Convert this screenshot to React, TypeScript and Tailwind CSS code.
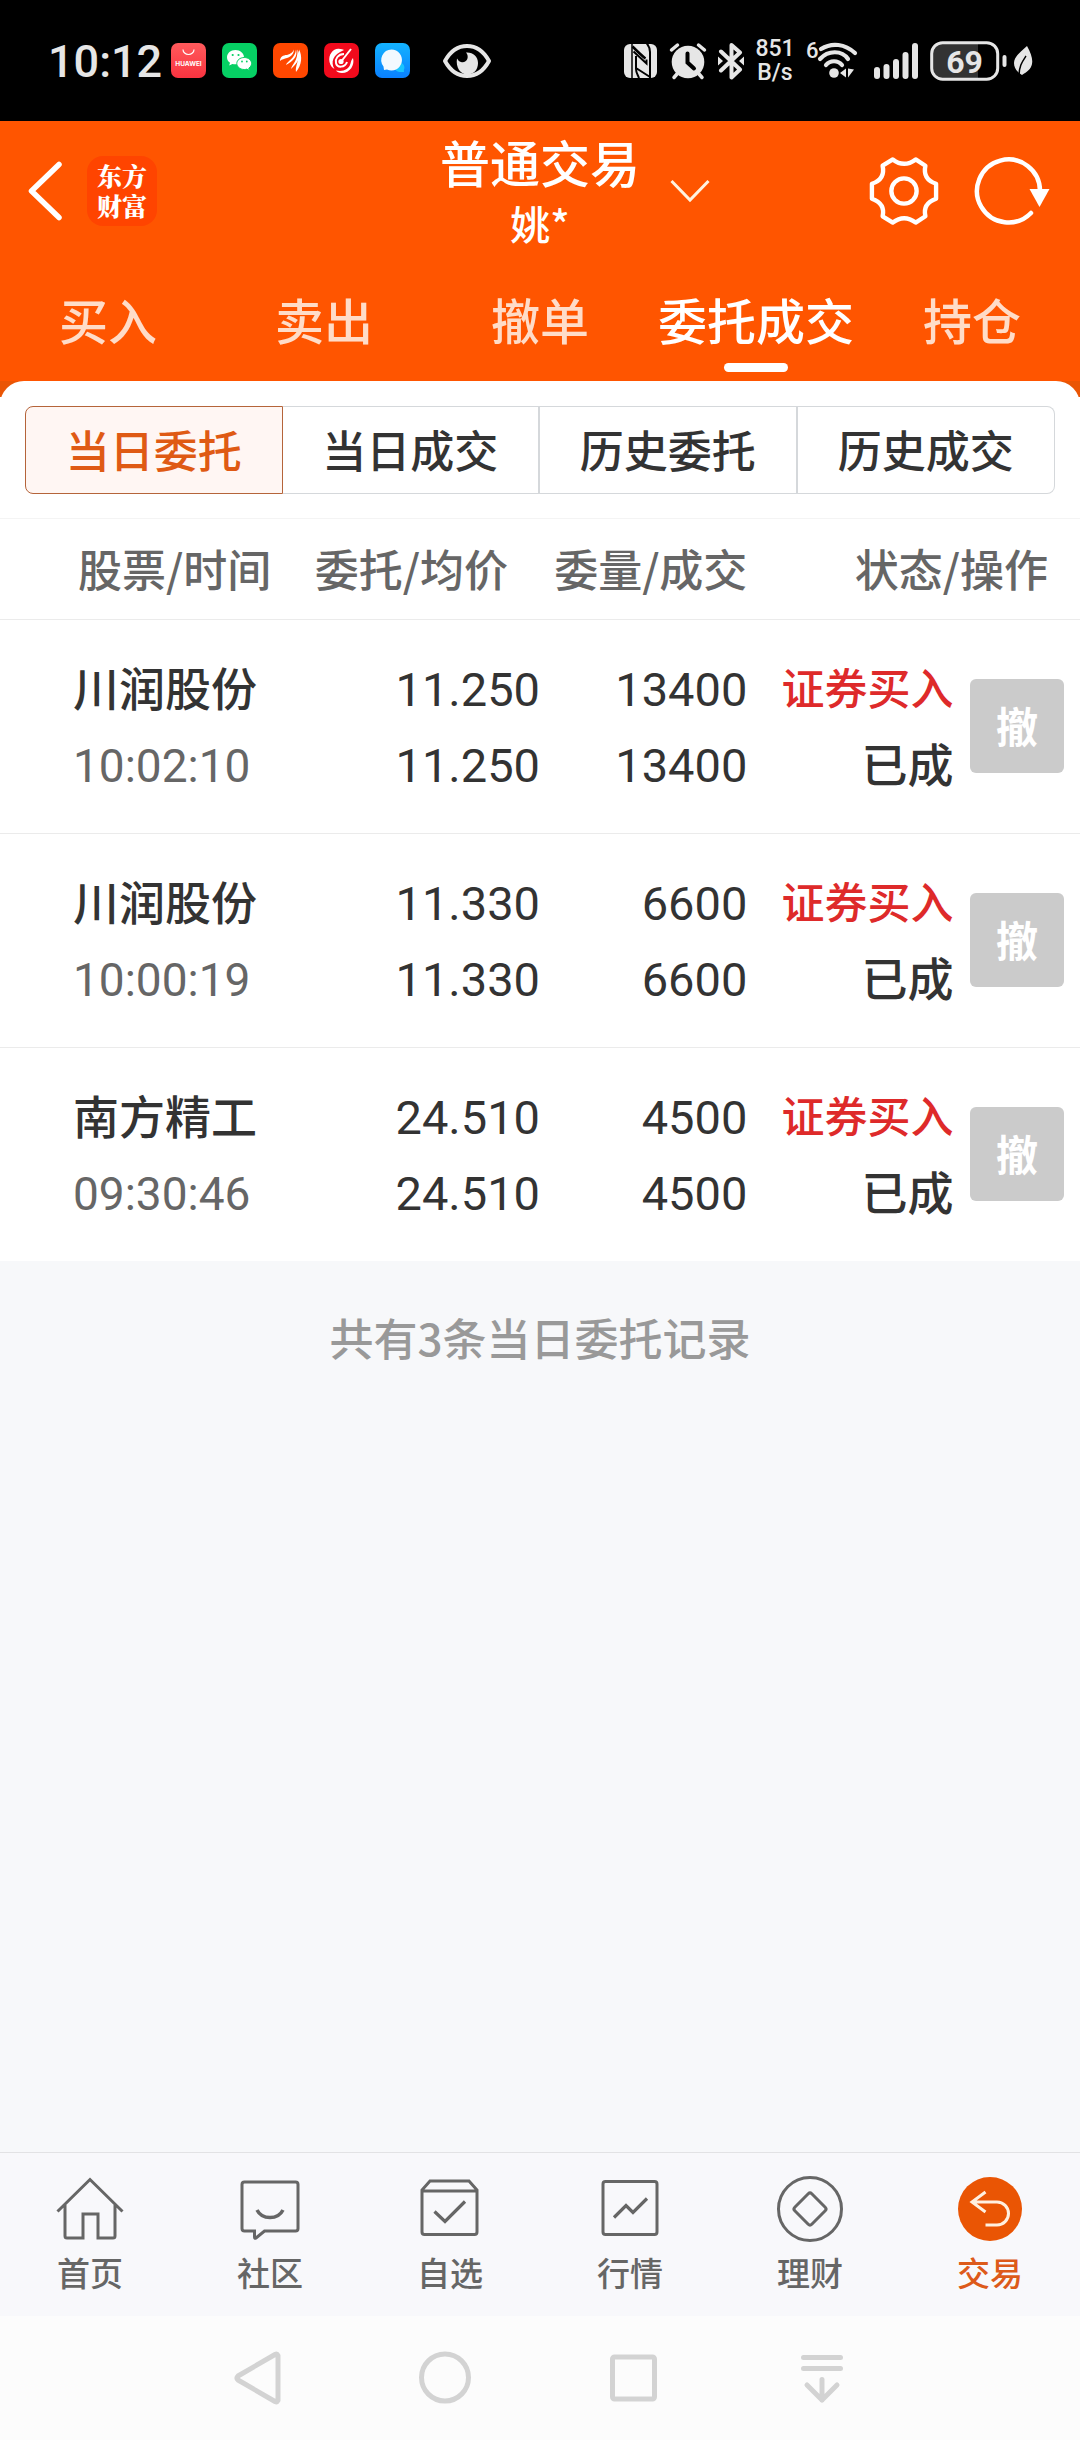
import React, { useState } from 'react';

interface Order {
  id: number;
  name: string;
  time: string;
  price: string;
  avgPrice: string;
  volume: number;
  filled: number;
  side: string;
  status: string;
}

const orders: Order[] = [
  { id: 1, name: '川润股份', time: '10:02:10', price: '11.250', avgPrice: '11.250', volume: 13400, filled: 13400, side: '证券买入', status: '已成' },
  { id: 2, name: '川润股份', time: '10:00:19', price: '11.330', avgPrice: '11.330', volume: 6600, filled: 6600, side: '证券买入', status: '已成' },
  { id: 3, name: '南方精工', time: '09:30:46', price: '24.510', avgPrice: '24.510', volume: 4500, filled: 4500, side: '证券买入', status: '已成' },
];

const mainTabs = ['买入', '卖出', '撤单', '委托成交', '持仓'];
const subTabs = ['当日委托', '当日成交', '历史委托', '历史成交'];

const numberFont = "font-['Roboto','Noto_Sans_CJK_SC',sans-serif]";

const AppBadges: React.FC = () => (
  <div className="flex items-center gap-4">
    <svg viewBox="0 0 35 35" className="size-[35px]">
      <defs>
        <linearGradient id="huawei" x1="0" y1="0" x2="0" y2="1">
          <stop offset="0" stopColor="#ff5a5c" />
          <stop offset="1" stopColor="#f93340" />
        </linearGradient>
      </defs>
      <rect width="35" height="35" rx="7" fill="url(#huawei)" />
      <path d="M12 6.5a5.5 5 0 0 0 11 0" fill="none" stroke="#fff" strokeWidth="1.2" />
      <text x="17.5" y="22.5" fontSize="6.5" fontWeight="700" fontFamily="Inter, sans-serif" textAnchor="middle" fill="#fff">HUAWEI</text>
    </svg>
    <svg viewBox="0 0 35 35" className="size-[35px]">
      <rect width="35" height="35" rx="7" fill="#06d064" />
      <path d="M13.5 7C8.600 7 5 10.200 5 14.200c0 2.300 1.200 4.200 3 5.500l-.8 2.800 3.200-1.600c1 .3 2 .4 3.100.4 4.700 0 8.500-3.200 8.500-7.100S18.200 7 13.500 7Z" fill="#fff" />
      <path d="M22.300 14.500c-4.200 0-7.500 2.700-7.500 6s3.300 6 7.500 6c.9 0 1.700-.1 2.500-.4l2.700 1.400-.7-2.400c1.700-1.100 2.800-2.700 2.800-4.600 0-3.300-3.200-6-7.300-6Z" fill="#fff" stroke="#06d064" />
      <circle cx="10.700" cy="12" r="1.100" fill="#06d064" />
      <circle cx="16.500" cy="12" r="1.100" fill="#06d064" />
      <circle cx="20" cy="18.500" r=".9" fill="#06d064" />
      <circle cx="24.800" cy="18.500" r=".9" fill="#06d064" />
    </svg>
    <svg viewBox="0 0 35 35" className="size-[35px]">
      <rect width="35" height="35" rx="7" fill="#ff4700" />
      <path d="M7 18c0-4 3-6 7-6 4-1 6-3 7-5.500-.3 5-3 7-7 8.500-2.500 1-5 1-7 3Z" fill="#fff" />
      <path d="M13 22c1-4 9-6 10-15.500C25 14 20 18 13 22Z" fill="#fff" />
      <path d="M18 26c1-5 7-8 6.500-19.500C28.500 14 26 18 18 26Z" fill="#fff" />
      <path d="M23 29c-1-6 3-10 3-22.500C29.500 13 29 22 23 29Z" fill="#fff" />
    </svg>
    <svg viewBox="0 0 35 35" className="size-[35px]">
      <rect width="35" height="35" rx="7" fill="#f20a1c" />
      <path d="M16 6C10 4.500 4 11 5.500 19c1 4 3 6 5 7-4-7-2-14 9.500-19-1.300-.7-3-1-4-1Z" fill="#fff" />
      <path d="M29 15c2 7-3 15-11 15-3 0-5-1-6-2.500 7 1.500 13-1 14.500-7 .5-2 1-4 2.500-5.500Z" fill="#fff" />
      <path d="M20 11c-6 0-9 5-8 9 1 5 9 5 11-1" fill="none" stroke="#fff" strokeWidth="2" />
      <path d="M27 6 16 20" stroke="#fff" strokeWidth="2" />
      <circle cx="17" cy="18.500" r="2.600" fill="#fff" />
    </svg>
    <svg viewBox="0 0 35 35" className="size-[35px]">
      <defs>
        <linearGradient id="message" x1="0" y1="0" x2="0" y2="1">
          <stop offset="0" stopColor="#13b3ff" />
          <stop offset="1" stopColor="#0a80ff" />
        </linearGradient>
      </defs>
      <rect width="35" height="35" rx="7" fill="url(#message)" />
      <path d="M24.500 19.500a5 5 0 0 1 4.300 7.400l.2 2.100h-4.500a4.750 4.750 0 0 1 0-9.500Z" fill="#19c5ff" />
      <path d="M16.500 6.500a10.500 10.500 0 1 1-4.500 20L9 27l-.5-3.500A10.500 10.500 0 0 1 16.500 6.500Z" fill="#f2f9ff" />
    </svg>
  </div>
);

const StatusBar: React.FC = () => (
  <div className={`flex h-[121px] items-center justify-between bg-black pr-[47px] pl-12 text-[#e6e6e6] ${numberFont}`}>
    <div className="flex items-center">
      <span className="w-[123px] pt-[2px] text-[45px] font-medium">10:12</span>
      <AppBadges />
      <svg viewBox="0 0 50 36" className="ml-8 h-9 w-[50px]" fill="none" stroke="currentColor" strokeWidth="4">
        <path d="M3 18C9 7 17 3 25 3s16 4 22 15c-6 11-14 15-22 15S9 29 3 18Z" strokeLinejoin="round" />
        <path d="M24 9.500c4 4.500.5 11-5 9.500-2-.5-3-2-4-3.500-1.500 9 3.500 16 10.500 16 6.500 0 10.500-5 10.500-11.500S31 9 24 9.500Z" fill="currentColor" stroke="none" />
      </svg>
    </div>

    <div className="flex items-center">
      <svg viewBox="0 0 34 34" className="size-[34px]">
        <rect width="33" height="34" rx="6" fill="currentColor" />
        <g fill="none" stroke="#000">
          <path d="M8 0v34" strokeWidth="1.500" />
          <path d="M22.500-1c2.500 3 3.500 5 3.500 9v26" strokeWidth="2" />
          <path d="M8.500 2.500C14 8 18 12 21.500 14.500" strokeWidth="2.500" />
          <path d="M9.500 7.500 22.500 19.500V15.500" strokeWidth="2" />
          <path d="M12 12v13c0 4 2 6 3 9M12 24l14 9" strokeWidth="2" />
        </g>
      </svg>
      <svg viewBox="0 0 38 38" className="ml-[11px] size-[38px]">
        <g stroke="currentColor" strokeWidth="3.500" strokeLinecap="round">
          <path d="m2.500 8 6-5M35.500 8l-6-5M8 32l-3 3.500M30 32l3 3.500" />
        </g>
        <circle cx="19" cy="20" r="16.300" fill="currentColor" />
        <path d="M18.500 11.500v9l6.500 6" fill="none" stroke="#000" strokeWidth="4" strokeLinecap="round" />
      </svg>
      <svg viewBox="0 0 28 38" className="ml-[10px] h-[38px] w-7">
        <path d="m4 9.500 19 18-8.500 8V3L23 10.500 4 28.500" fill="none" stroke="currentColor" strokeWidth="4" strokeLinejoin="round" strokeLinecap="round" />
        <path d="m1 14.500 5 4.500-5 4.500ZM27 14.500 22 19l5 4.500Z" fill="currentColor" />
      </svg>
      <div className="ml-[11px] flex w-[38px] flex-col items-center text-[23px] leading-6 font-medium">
        <span>851</span>
        <span>B/s</span>
      </div>
      <svg viewBox="0 0 52 40" className="ml-3 h-10 w-[52px] overflow-visible">
        <text x="0" y="17" fontSize="22" fontWeight="500" fontFamily="Roboto, sans-serif" fill="currentColor">6</text>
        <g fill="none" stroke="currentColor" strokeWidth="4.200" strokeLinecap="round">
          <path d="M15 8c11-7 24-5 34 4" />
          <path d="M14 18c8-9 22-9 28 0" />
          <path d="M20 24c4-5 12-5 16 0" />
        </g>
        <circle cx="28" cy="32" r="4.800" fill="currentColor" />
        <path d="M34 32l6-4.500v9ZM42 27.500v9l6-8Z" fill="currentColor" />
      </svg>
      <svg viewBox="0 0 45 38" className="ml-4 h-[38px] w-[45px]" fill="currentColor">
        <rect x="0" y="25" width="6" height="12" rx="3" />
        <rect x="9.500" y="22" width="6" height="15" rx="3" />
        <rect x="19" y="17" width="6" height="20" rx="3" />
        <rect x="28.500" y="10" width="6" height="27" rx="3" />
        <rect x="38" y="1" width="6" height="36" rx="3" />
      </svg>
      <svg viewBox="0 0 78 40" className="ml-[11px] h-10 w-[78px]">
        <path d="M13 3h35v34H13A10 10 0 0 1 3 27V13A10 10 0 0 1 13 3Z" fill="#333" />
        <rect x="1.700" y="1.700" width="66" height="36.500" rx="11" fill="none" stroke="currentColor" strokeWidth="3" />
        <rect x="72.500" y="14" width="4" height="12" rx="2" fill="currentColor" />
        <text x="34.500" y="31.500" fontSize="32" fontWeight="700" fontFamily="Roboto, sans-serif" textAnchor="middle" fill="currentColor">69</text>
      </svg>
      <svg viewBox="0 0 20 32" className="ml-[5px] h-8 w-5">
        <path d="M14 1c4 7 6 13 5 18-1 5-5 8-10 11C4 27 1 23 1 18 1 11 8 7 14 1Z" fill="currentColor" />
        <path d="M13 11C9 17 6 21 6 31" fill="none" stroke="#000" strokeWidth="1.500" />
      </svg>
    </div>
  </div>
);

const bottomNav = [
  {
    label: '首页',
    icon: <path d="M2.500 35.500 35 3.500l32.500 32M10 29v31q0 2 2 2h16V38h15v24h15q2 0 2-2V29" />,
  },
  {
    label: '社区',
    icon: (
      <>
        <path d="M9.500 6h51q2.500 0 2.500 2.500v44q0 2.500-2.500 2.500h-31L21 62q-1.500 1-1.500-1v-6h-10Q7 55 7 52.500v-44Q7 6 9.500 6Z" />
        <path d="M22 34c5 10 21 10 26 0" strokeWidth="3.500" />
      </>
    ),
  },
  {
    label: '自选',
    icon: (
      <>
        <path d="M7 14v42q0 2.500 2.500 2.500h50q2.500 0 2.500-2.500V14l-8-9H15ZM7 15h55" />
        <path d="m19.500 35.500 10.500 10 20-20" strokeWidth="3.200" />
      </>
    ),
  },
  {
    label: '行情',
    icon: (
      <>
        <rect x="8" y="5.500" width="54" height="53" rx="2.500" />
        <path d="m19 41.500 12-12 7 7 14-14" strokeWidth="3.200" />
      </>
    ),
  },
  {
    label: '理财',
    icon: (
      <>
        <circle cx="35" cy="33" r="31.500" />
        <rect x="23" y="21" width="24" height="24" rx="2.500" transform="rotate(45 35 33)" />
      </>
    ),
  },
  {
    label: '交易',
    icon: (
      <>
        <circle cx="35" cy="33" r="32" fill="#ea5504" stroke="none" />
        <path d="M30.500 16 17 26l13.500 10M17 26h25a11.300 11.300 0 0 1 0 23H30.500" stroke="#fff0e0" strokeWidth="3" />
      </>
    ),
  },
];

const App: React.FC = () => {
  const [activeMain, setActiveMain] = useState('委托成交');
  const [activeSub, setActiveSub] = useState('当日委托');
  const [activeNav, setActiveNav] = useState('交易');

  return (
    <div className="flex min-h-screen flex-col bg-[#f7f8fa] font-['Noto_Sans_CJK_SC',sans-serif] font-medium text-[#333]">
      <StatusBar />

      <header className="bg-[#ff5500] text-white">
        <div className="grid h-[140px] grid-cols-[1fr_auto_1fr] items-center">
          <div className="flex items-center gap-6 pl-[26px]">
            <button type="button" aria-label="返回">
              <svg viewBox="0 0 37 62" className="h-[62px] w-[37px]" fill="none" stroke="currentColor" strokeWidth="5.500">
                <path d="M33 4.500 5.500 31 33 57.500" strokeLinecap="round" strokeLinejoin="round" />
              </svg>
            </button>
            <div className="flex size-[70px] flex-col items-center justify-center rounded-2xl bg-[#ff4400] pb-[2px] font-['Noto_Serif_CJK_SC','Noto_Sans_CJK_SC',serif] text-[25px] leading-[30px] font-black">
              <span>东方</span>
              <span>财富</span>
            </div>
          </div>
          <div className="flex flex-col items-center pt-[2px] leading-[62px]">
            <h1 className="text-[50px]">普通交易</h1>
            <p className="text-[40px]">姚*</p>
          </div>
          <div className="flex items-center pr-[30px] pl-[30px]">
            <button type="button" aria-label="切换账户" className="mr-auto">
              <svg viewBox="0 0 40 24" className="h-6 w-10" fill="none" stroke="#fff3e0" strokeWidth="3">
                <path d="m1.500 2 18.500 19L38.500 2" />
              </svg>
            </button>
            <button type="button" aria-label="设置">
              <svg viewBox="0 0 72 72" className="size-[70px]" fill="none" stroke="currentColor" strokeWidth="4.500" strokeLinejoin="round">
                <path d="M24.500 3.500q11.500 9 23.500 0L58 10q-3 14 11 18.500V44q-14 5-11 18l-10 6.500q-12-9-23.500 0L14 62q3-13-11-18V28.500Q17 24 14 10Z" />
                <circle cx="36" cy="36" r="13" />
              </svg>
            </button>
            <button type="button" aria-label="刷新" className="ml-[35px]">
              <svg viewBox="0 0 76 72" className="h-[72px] w-[76px]" fill="none" stroke="currentColor" strokeWidth="4.500">
                <path d="M57 58A31.500 31.500 0 1 1 66 36" strokeLinecap="round" />
                <path d="M55.500 34h20L65.500 52Z" fill="currentColor" stroke="none" />
              </svg>
            </button>
          </div>
        </div>

        <nav className="grid grid-cols-5">
          {mainTabs.map((tab) => (
            <button
              key={tab}
              type="button"
              onClick={() => setActiveMain(tab)}
              className={`flex flex-col items-center pt-7 pb-[9px] text-[49px] leading-[60px] ${tab === activeMain ? 'text-white' : 'text-[#ffdcc8]'}`}
            >
              {tab}
              <span className={`mt-[14px] h-[9px] w-16 rounded-full ${tab === activeMain ? 'bg-white' : ''}`} />
            </button>
          ))}
        </nav>
      </header>

      <main className="flex-1">
        {/* only the top strip behind the rounded corners is orange */}
        <div className="bg-linear-to-b from-[#ea5504] from-[16px] to-white to-[16px]">
          <div className="rounded-t-3xl bg-white px-[25px] pt-[25px] pb-6">
            <div className="grid h-[88px] grid-cols-4">
              {subTabs.map((tab) => (
                <button
                  key={tab}
                  type="button"
                  onClick={() => setActiveSub(tab)}
                  className={`border-y border-r-2 pb-[3px] text-[44px] leading-[60px] first:rounded-l-lg first:border-x last:rounded-r-lg last:border-r ${
                    tab === activeSub ? 'border-[#b5643a] bg-[#fff6f3] text-[#df5a14]' : 'border-[#d5d8db]'
                  }`}
                >
                  {tab}
                </button>
              ))}
            </div>
          </div>
        </div>

        <table className="w-full table-fixed border-separate border-spacing-0 border-t border-[#f4f4f4] bg-white">
          <colgroup>
            <col className="w-[28%]" />
            <col className="w-[22%]" />
            <col className="w-[19.2%]" />
            <col className="w-[19.1%]" />
            <col className="w-[11.7%]" />
          </colgroup>
          <thead>
            <tr className="h-[101px] text-[44px] whitespace-nowrap text-[#666] [&>th]:border-b [&>th]:border-[#ebebeb] [&>th]:pb-[3px] [&>th]:font-medium">
              <th className="pl-[78px] text-left">股票/时间</th>
              <th className="pr-8 text-right">委托/均价</th>
              <th className="text-right">委量/成交</th>
              <th colSpan={2} className="pr-8 text-right">状态/操作</th>
            </tr>
          </thead>
          <tbody>
            {orders.map((order) => (
              <tr
                key={order.id}
                className="h-[214px] text-[46px] leading-[76px] whitespace-nowrap last:h-[213px] [&>td]:border-b [&>td]:border-[#ebebeb] last:[&>td]:border-b-0"
              >
                <td className="pt-7 pl-[73px] align-top">
                  <div>{order.name}</div>
                  <div className={`leading-[84px] font-normal text-[#666] ${numberFont}`}>{order.time}</div>
                </td>
                <td className={`pt-8 text-right align-top text-[47px] font-normal ${numberFont}`}>
                  <div>{order.price}</div>
                  <div>{order.avgPrice}</div>
                </td>
                <td className={`pt-8 text-right align-top text-[47px] font-normal ${numberFont}`}>
                  <div>{order.volume}</div>
                  <div>{order.filled}</div>
                </td>
                <td className="pt-7 text-right align-top">
                  <div className="text-[43px] text-[#de2a2a]">{order.side}</div>
                  <div>{order.status}</div>
                </td>
                <td className="pr-4 pb-[2px] text-right">
                  <button type="button" className="size-[94px] rounded-md bg-[#cbcbcb] pb-[2px] align-middle text-[42px] leading-[60px] font-bold text-white">
                    撤
                  </button>
                </td>
              </tr>
            ))}
          </tbody>
        </table>

        <p className="py-[46px] text-center text-[44px] leading-[60px] text-[#999]">共有{orders.length}条当日委托记录</p>
      </main>

      <nav className="grid grid-cols-6 border-t border-[#e2e2e4] bg-[#f8f8fb]">
        {bottomNav.map((item) => (
          <button
            key={item.label}
            type="button"
            onClick={() => setActiveNav(item.label)}
            className={`flex flex-col items-center pt-[23px] pb-5 text-[33px] leading-[48px] ${
              item.label === activeNav ? 'text-[#dd5a1a]' : 'text-[#666]'
            }`}
          >
            <svg viewBox="0 0 70 70" className="mb-[2px] size-[70px]" fill="none" stroke="currentColor" strokeWidth="3">
              {item.icon}
            </svg>
            {item.label}
          </button>
        ))}
      </nav>

      <div className="flex h-[124px] items-center justify-center bg-[#fcfcfc]">
        <button type="button" aria-label="后退" className="flex w-[188px] justify-center">
          <svg viewBox="0 0 56 56" className="size-14" fill="none" stroke="#d3d3d3" strokeWidth="5" strokeLinejoin="round">
            <path d="M48 5.500v45q-1 2-3 1L8 30q-2-2 0-4L45 4.500q2-1 3 1Z" />
          </svg>
        </button>
        <button type="button" aria-label="主屏幕" className="flex w-[188px] justify-center">
          <svg viewBox="0 0 56 56" className="size-14" fill="none" stroke="#d3d3d3" strokeWidth="5">
            <circle cx="27" cy="27.500" r="23.500" />
          </svg>
        </button>
        <button type="button" aria-label="最近任务" className="flex w-[188px] justify-center">
          <svg viewBox="0 0 56 56" className="size-14" fill="none" stroke="#d3d3d3" strokeWidth="5">
            <rect x="6.500" y="7" width="42" height="42" rx="2" />
          </svg>
        </button>
        <button type="button" aria-label="通知栏" className="flex w-[188px] justify-center">
          <svg viewBox="0 0 56 56" className="size-14" fill="none" stroke="#d3d3d3" strokeWidth="5" strokeLinecap="round" strokeLinejoin="round">
            <path d="M9.500 7.500h37M9.500 18.500h37M28 29.500V50M13 35l15 15 15-15" />
          </svg>
        </button>
      </div>
    </div>
  );
};

export default App;
